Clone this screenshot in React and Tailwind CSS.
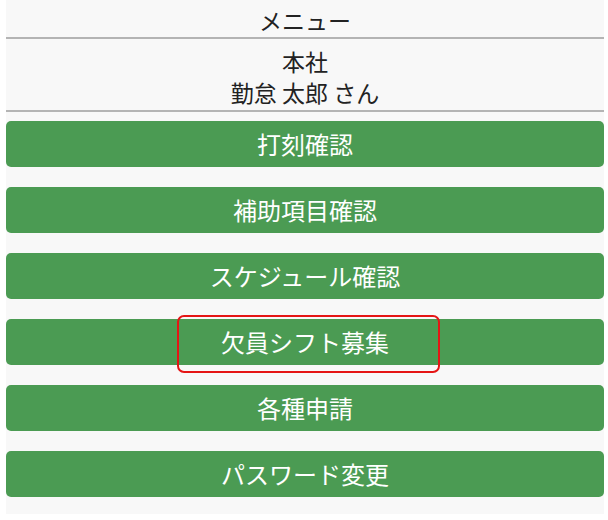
const items = ['打刻確認', '補助項目確認', 'スケジュール確認', '欠員シフト募集', '各種申請', 'パスワード変更'];

export default function App() {
  return (
    <div className="min-h-screen bg-white font-['Noto_Sans_CJK_JP','Noto_Sans',sans-serif]">
      <div className="ml-[6px] w-[598px] bg-[#f8f8f8] pb-[17px]">
        <div className="flex h-[39px] items-center justify-center border-b-2 border-[#b4b4b4] pt-[4px] text-[23px] text-[#222]">
          メニュー
        </div>
        <div className="flex flex-col items-center border-b-2 border-[#b4b4b4] pt-[7px] pb-[2px] text-[23px] leading-[31px] text-[#222]">
          <div>本社</div>
          <div>勤怠 太郎 さん</div>
        </div>
        <div className="mt-[9px] flex flex-col gap-5">
          {items.map((label, i) => (
            <div
              key={label}
              className="relative flex h-[46px] items-center justify-center rounded-[5px] bg-[#4b9b53] text-[24px] text-white"
            >
              {label}
              {i === 3 && (
                <div className="absolute left-[171px] top-[-4px] h-[58px] w-[263px] rounded-[7px] border-2 border-[#e51515]" />
              )}
            </div>
          ))}
        </div>
      </div>
    </div>
  );
}
